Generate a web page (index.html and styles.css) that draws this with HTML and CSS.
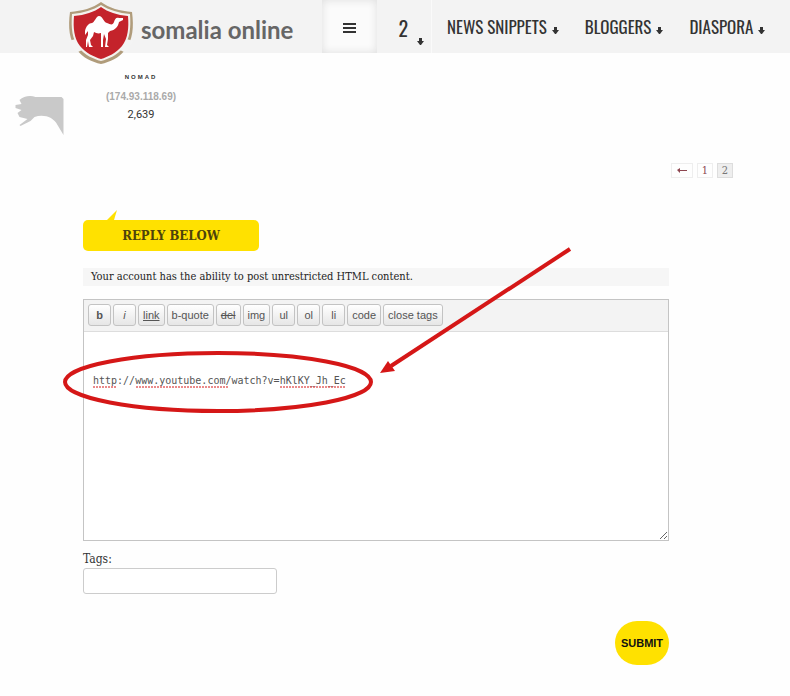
FILE: index.html
```html
<!DOCTYPE html>
<html lang="en">
<head>
<meta charset="utf-8">
<title>Somalia Online</title>
<link rel="stylesheet" href="styles.css">
</head>
<body>
<header class="topbar">
  <a class="brand" href="#">
    <svg class="shield" viewBox="0 0 66 64" aria-hidden="true">
      <path d="M33 1C25 7 14 10 2 11C0 26 1 39 9 49C15 57 24 61 33 63C42 61 51 57 57 49C65 39 66 26 64 11C52 10 41 7 33 1Z" fill="#b09c7b"/>
      <path d="M33 4C25 9 15 12 4 13C3 27 4 38 11 47C17 54 25 58 33 60C41 58 49 54 55 47C62 38 63 27 62 13C51 12 41 9 33 4Z" fill="#f4f2ee"/>
      <path d="M0 40L8 38L14 49L8 52ZM66 40L58 38L52 49L58 52Z" fill="#f4f4f4"/>
      <path d="M33 6C26 11 17 14 6 15C5 27 6 37 12 45C18 52 26 56 33 58C40 56 48 52 54 45C60 37 61 27 60 15C49 14 40 11 33 6Z" fill="#c4232b"/>
      <path d="M17 30C18 25 21 22 24 22C27 21 28 15 31 15C35 15 35 21 39 22C43 24 45 24 46 21C47 18 48 16 51 17L55 17L55 19L51 21C50 26 47 29 42 30L40 32L40 38L39 44L41 46H37L38 38L36 33L35 39L35 46H33L33 39L33 32C30 33 28 32 26 31L25 35L22 39L23 44L25 46H21L20 40L19 46H18L18 39L20 34L20 30L17 34Z" fill="#fff"/>
    </svg>
    <span class="brand-name">somalia online</span>
  </a>
  <nav class="nav" aria-label="Main">
    <button class="menu-btn" aria-label="Menu"><span class="bars"></span></button>
    <a class="count" href="#">2<svg class="down" viewBox="0 0 7 7" aria-hidden="true"><path d="M2 0H5V3H7L4 7H3L0 3H2Z"/></svg></a>
    <a class="nav-link" href="#">NEWS SNIPPETS<svg class="down" viewBox="0 0 7 7" aria-hidden="true"><path d="M2 0H5V3H7L4 7H3L0 3H2Z"/></svg></a>
    <a class="nav-link" href="#">BLOGGERS<svg class="down" viewBox="0 0 7 7" aria-hidden="true"><path d="M2 0H5V3H7L4 7H3L0 3H2Z"/></svg></a>
    <a class="nav-link" href="#">DIASPORA<svg class="down" viewBox="0 0 7 7" aria-hidden="true"><path d="M2 0H5V3H7L4 7H3L0 3H2Z"/></svg></a>
  </nav>
</header>
<main>
  <section class="author">
    <svg class="avatar" viewBox="0 0 48 40" aria-hidden="true"><path d="M46 1H20C15-1 8 0 4 4L6 8L0 9L0 12L6 14L2 17L4 21L12 23L4 29L5 30L15 25L19 21C28 18 38 21 42 29L48 39V3Z"/></svg>
    <div class="author-info">
      <span class="rank">NOMAD</span>
      <span class="ip">(174.93.118.69)</span>
      <span class="posts">2,639</span>
    </div>
  </section>
  <nav class="pages" aria-label="Pages">
    <a class="prev" href="#" aria-label="Previous"><svg viewBox="0 0 10 5" aria-hidden="true"><path d="M3 0L0 2L3 5V3H10V2H3Z"/></svg></a>
    <a href="#">1</a>
    <span class="current">2</span>
  </nav>
  <form class="reply">
    <h2 class="reply-title">REPLY BELOW</h2>
    <p class="notice">Your account has the ability to post unrestricted HTML content.</p>
    <div class="editor">
      <div class="toolbar">
        <button type="button"><b>b</b></button>
        <button type="button"><i>i</i></button>
        <button type="button"><u>link</u></button>
        <button type="button">b-quote</button>
        <button type="button"><del>del</del></button>
        <button type="button">img</button>
        <button type="button">ul</button>
        <button type="button">ol</button>
        <button type="button">li</button>
        <button type="button">code</button>
        <button type="button">close tags</button>
      </div>
      <textarea class="content" aria-label="Reply" spellcheck="false">


http://www.youtube.com/watch?v=hKlKY_Jh_Ec</textarea>
      <svg class="marks" viewBox="0 0 520 170" aria-hidden="true">
        <path class="spelling" d="M30 140H54M73 140H165M217 140H282"/>
        <ellipse cx="155" cy="135" rx="153" ry="29"/>
        <path class="shaft" d="M507 2L328 119"/>
        <path class="head" d="M317 126L325 114L332 124Z"/>
      </svg>
    </div>
    <label class="tags-label" for="tags">Tags:</label>
    <input class="tags" id="tags" type="text">
    <button class="submit" type="submit">SUBMIT</button>
  </form>
</main>
</body>
</html>
```
FILE: styles.css
```css
* { box-sizing: border-box; }
body {
  margin: 0;
  background: #fefefe;
  color: #333;
  font: 12px/16px "Roboto Slab", "DejaVu Serif Condensed", "DejaVu Serif", serif;
}
a { color: inherit; text-decoration: none; }
button { font: inherit; color: inherit; cursor: pointer; }

.topbar {
  display: flex;
  height: 53px;
  padding-left: 68px;
  background: #f3f3f3;
}
.brand { display: flex; flex: none; width: 254px; gap: 7px; }
.shield { flex: none; width: 66px; height: 66px; }
.brand-name {
  color: #666;
  font: bold 24px/60px Lato, sans-serif;
  white-space: nowrap;
}
.nav {
  display: flex;
  flex: 1;
  color: #333;
  font: 17px/53px "Oswald", "Roboto Condensed", "Liberation Sans Narrow", sans-serif;
}
.menu-btn {
  display: grid;
  place-items: center;
  width: 55px;
  padding: 0;
  border: 0;
  background: #fbfbfb;
  box-shadow: inset 0 0 8px #ddd;
}
.bars {
  width: 13px;
  height: 10px;
  margin-top: 3px;
  border-top: 2px solid #333;
  border-bottom: 2px solid #333;
  background: linear-gradient(#333, #333) center / 100% 2px no-repeat;
}
.count {
  display: flex;
  justify-content: flex-end;
  gap: 9px;
  width: 55px;
  padding-right: 7px;
  border-right: 1px solid #fafafa;
  font-size: 20px;
  line-height: 56px;
}
.count .down { align-self: flex-end; margin-bottom: 8px; }
.down { flex: none; width: 7px; height: 7px; fill: #333; }
.nav-link {
  display: flex;
  align-items: center;
  gap: 5px;
  margin-left: 15px;
  margin-right: 11px;
  white-space: nowrap;
}
.nav-link .down { margin-top: 8px; }

main { padding: 20px 57px 31px 83px; }
.author { display: flex; height: 90px; margin-left: -68px; }
.avatar { width: 49px; height: 40px; margin-top: 23px; fill: #c9c9c9; }
.author-info {
  display: flex;
  flex-direction: column;
  align-items: center;
  width: 154px;
}
.rank { font: bold 6px/8px "Liberation Sans", sans-serif; letter-spacing: 2px; }
.ip { margin-top: 8px; color: #aaa; font: bold 10px/16px "Liberation Sans", sans-serif; }
.posts { margin-top: 2px; font: 11px/16px "Roboto", sans-serif; }

.pages { display: flex; justify-content: flex-end; gap: 4px; font: 11px/14px "DejaVu Serif Condensed", serif; }
.pages > * { width: 16px; height: 15px; border: 1px solid #eee; text-align: center; color: #8d4650; }
.pages .prev { display: grid; place-items: center; width: 22px; }
.pages svg { width: 10px; height: 5px; fill: #8d4650; }
.pages .current { background: #eee; border-color: #ddd; color: #777; }

.reply { display: flex; flex-direction: column; align-items: flex-start; margin: 42px 64px 0 0; }
.reply-title {
  position: relative;
  width: 176px;
  margin: 0;
  border-radius: 5px;
  background: #ffe100;
  color: #4d430b;
  font-size: 13px;
  line-height: 31px;
  text-align: center;
}
.reply-title::before {
  content: "";
  position: absolute;
  left: 24px;
  top: -10px;
  width: 10px;
  height: 10px;
  background: #ffe100;
  clip-path: polygon(100% 0, 70% 100%, 0 100%);
}
.notice { align-self: stretch; margin: 17px 0 13px; padding: 0 8px; background: #f6f6f6; font-size: 11px; line-height: 18px; color: #222; }
.editor { position: relative; align-self: stretch; border: 1px solid #c4c4c4; }
.toolbar { display: flex; gap: 2px; height: 32px; padding: 4px; background: #f3f3f3; border-bottom: 1px solid #ddd; }
.toolbar button {
  height: 22px;
  min-width: 23px;
  padding: 0 4px;
  border: 1px solid #c3c3c3;
  border-radius: 3px;
  background: linear-gradient(#fff, #e6e6e6);
  color: #555;
  font: 11px/20px "Liberation Sans", sans-serif;
}
.content {
  display: block;
  width: 100%;
  height: 208px;
  padding: 9px;
  border: 0;
  outline: 0;
  background: #fff;
  color: #555;
  font: 10px/16px "DejaVu Sans Mono", monospace;
  resize: vertical;
}
.marks {
  position: absolute;
  left: -21px;
  top: -53px;
  width: 520px;
  height: 170px;
  fill: none;
  stroke: #d51717;
  stroke-width: 4px;
  pointer-events: none;
}
.marks .head { fill: #d51717; stroke: none; }
.marks .spelling { stroke-width: 1px; stroke-dasharray: 2 1; }
.tags-label { margin-top: 10px; line-height: 17px; }
.tags { width: 194px; height: 26px; padding: 4px; border: 1px solid #ccc; border-radius: 3px; background: #fff; }
.submit {
  align-self: flex-end;
  width: 54px;
  height: 44px;
  margin-top: 27px;
  padding: 0;
  border: 0;
  border-radius: 24px;
  background: #ffe100;
  color: #111;
  font: bold 11px/16px "Liberation Sans", sans-serif;
}
```
